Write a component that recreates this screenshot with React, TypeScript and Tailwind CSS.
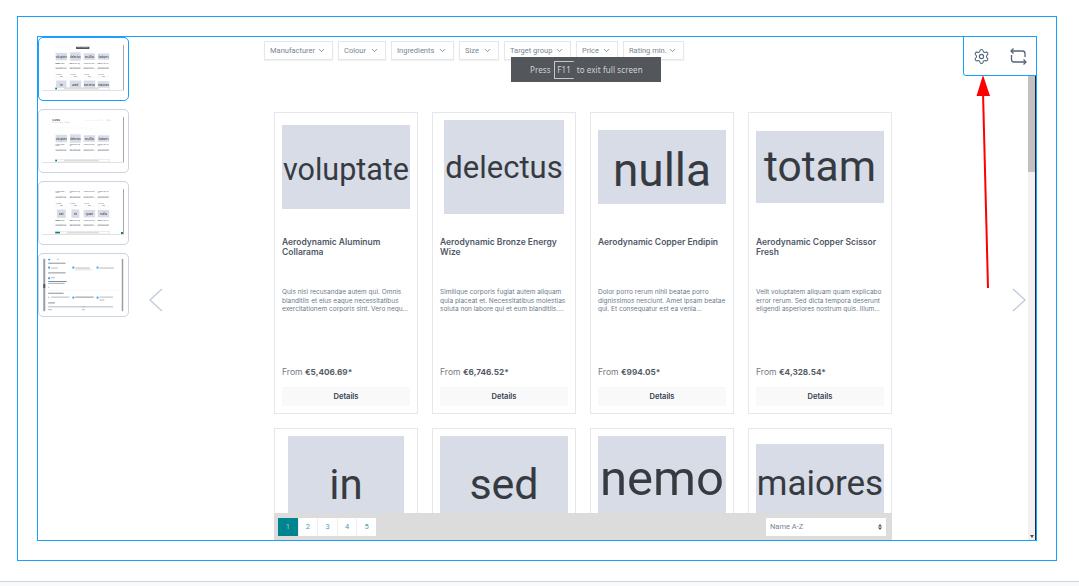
import React from "react";
import { ChevronDown, Settings } from "lucide-react";

interface Product {
  word: string;
  image: string;
  title: string;
  text: string;
  price: string;
}

type CardPart = "full" | "image" | "top" | "bottom";

const PRODUCTS: Product[] = [
  { word: "voluptate", image: "w-[128px] h-[84px] pt-[6px] text-[30.5px]", title: "Aerodynamic Aluminum Collarama", text: "Quis nisi recusandae autem qui. Omnis blanditiis et eius eaque necessitatibus exercitationem corporis sint. Vero nequ...", price: "€5,406.69*" },
  { word: "delectus", image: "w-[120px] h-[94px] pt-[3px] text-[31px]", title: "Aerodynamic Bronze Energy Wize", text: "Similique corporis fugiat autem aliquam quia placeat et. Necessitatibus molestias soluta non labore qui et eum blanditiis....", price: "€6,746.52*" },
  { word: "nulla", image: "w-[128px] h-[74px] pt-[6px] text-[46px]", title: "Aerodynamic Copper Endipin", text: "Dolor porro rerum nihil beatae porro dignissimos nesciunt. Amet ipsam beatae qui. Et consequatur est ea venia...", price: "€994.05*" },
  { word: "totam", image: "w-[128px] h-[72px] text-[42.5px]", title: "Aerodynamic Copper Scissor Fresh", text: "Velit voluptatem aliquam quam explicabo error rerum. Sed dicta tempora deserunt eligendi asperiores nostrum quis. Illum...", price: "€4,328.54*" },
  { word: "in", image: "w-[116px] h-[94px] pt-[2px] text-[42px]", title: "", text: "", price: "" },
  { word: "sed", image: "w-[128px] h-[94px] pt-[3px] text-[43px]", title: "", text: "", price: "" },
  { word: "nemo", image: "w-[128px] h-[94px] pb-[8px] text-[49px]", title: "", text: "", price: "" },
  { word: "maiores", image: "w-[128px] h-[78px] pt-[3px] text-[35px]", title: "", text: "", price: "" },
];

const NEXT_ROW: Product[] = [
  { ...PRODUCTS[0], word: "est", image: "w-[100px] h-[94px] text-[38px]" },
  { ...PRODUCTS[1], word: "et", image: "w-[90px] h-[94px] text-[38px]" },
  { ...PRODUCTS[2], word: "quae", image: "w-[128px] h-[84px] text-[38px]" },
  { ...PRODUCTS[3], word: "nulla", image: "w-[128px] h-[84px] text-[38px]" },
];

const FILTERS = [
  { label: "Manufacturer", width: "w-[69px]" },
  { label: "Colour", width: "w-[48px]" },
  { label: "Ingredients", width: "w-[63px]" },
  { label: "Size", width: "w-[40px]" },
  { label: "Target group", width: "w-[67px]" },
  { label: "Price", width: "w-[42px]" },
  { label: "Rating min.", width: "w-[61px]" },
];

function ProductCard({ product, part = "full" }: { product: Product; part?: CardPart }) {
  return (
    <div className="flex h-[302px] flex-col border border-[#e5e7eb] bg-white px-[7px] pt-[7px] pb-[7px] font-['Inter',sans-serif]">
      <div className="flex h-[94px] shrink-0 items-center justify-center">
        {part !== "bottom" && (
          <div className={`flex shrink-0 items-center justify-center bg-[#d8dce6] font-['Roboto',sans-serif] text-[#363b42] ${product.image}`}>
            {product.word}
          </div>
        )}
      </div>
      {part !== "image" && (
        <>
          <h3 className="mt-[23px] h-[51px] text-[8.5px] leading-[10px] font-semibold text-[#505866]">{product.title}</h3>
          <p className="text-[6.5px] leading-[8.5px] text-[#6b7a8c]">{product.text}</p>
        </>
      )}
      {(part === "full" || part === "bottom") && (
        <>
          <div className="mt-auto mb-[9px] text-[8.6px] leading-[11px] text-[#777b82]">
            From <span className="text-[8.2px] font-bold text-[#555b64]">{product.price}</span>
          </div>
          <button className="h-[19px] shrink-0 bg-[#f9f9f9] text-[7.5px] font-semibold text-[#374151]">Details</button>
        </>
      )}
    </div>
  );
}

function Filters() {
  return (
    <div className="flex gap-[5px] pl-[135px] font-['Roboto',sans-serif]">
      {FILTERS.map(({ label, width }) => (
        <div key={label} className={`flex h-[19px] items-center justify-between border border-[#e5e7eb] pr-[6px] pl-[5px] text-[7.5px] text-[#7a8591] shadow-[0_1px_1px_rgba(0,0,0,0.05)] ${width}`}>
          <span>{label}</span>
          <ChevronDown className="size-[9px] text-[#66717f]" />
        </div>
      ))}
    </div>
  );
}

function BottomBar({ wide }: { wide?: boolean }) {
  return (
    <div className="absolute bottom-0 left-[145px] flex h-[27px] w-[618px] items-center justify-between bg-[#dcdcdc] pr-[6px] pl-1 font-['Roboto',sans-serif]">
      <div className="flex h-[18px] text-[7.5px] text-[#4a9fb0]">
        <div className={`flex items-center justify-center bg-[#008490] text-[#9fd0d6] ${wide ? "w-[55px]" : "w-[19.6px]"}`}>1</div>
        {["2", "3", "4", "5"].map((n) => (
          <div key={n} className="flex w-[19.6px] items-center justify-center border-l border-[#eeeeee] bg-white">{n}</div>
        ))}
      </div>
      <div className="flex h-[18px] w-[120px] items-center justify-between bg-white px-1 text-[7.5px] text-[#7a8591]">
        <span>Name A-Z</span>
        <svg width="4" height="6" viewBox="0 0 4 6" className="fill-[#555]">
          <path d="M2 0 4 2.5H0ZM2 6 0 3.5H4Z" />
        </svg>
      </div>
    </div>
  );
}

function Toast() {
  return (
    <div className="absolute top-5 left-[382px] flex h-[25px] w-[150px] items-center gap-[3px] bg-[#53565a] pl-[19px] font-['Noto_Sans',sans-serif] text-[8px] tracking-[0.1px] text-[#d0d3d6]">
      <span>Press</span>
      <span className="flex h-[18px] w-[20px] items-center justify-center rounded-[1px] border-y border-l border-[#c4c7ca]">F11</span>
      <span>to exit full screen</span>
    </div>
  );
}

function Slide({ toast, children, wide, header }: {
  toast?: boolean;
  children: React.ReactNode;
  wide?: boolean;
  header?: React.ReactNode;
}) {
  return (
    <div className="relative h-[503px] w-[906px] shrink-0 overflow-hidden bg-white pt-1">
      {header}
      <Filters />
      <div className="mt-[52px] grid grid-cols-[repeat(4,144px)] gap-[14px] pl-[145px]">{children}</div>
      <BottomBar wide={wide} />
      {toast && <Toast />}
    </div>
  );
}

function TwoRows() {
  return (
    <>
      {PRODUCTS.slice(0, 4).map((p) => (
        <ProductCard key={p.word} product={p} />
      ))}
      {PRODUCTS.slice(4, 8).map((p) => (
        <ProductCard key={p.word} product={p} part="image" />
      ))}
    </>
  );
}

function PageHeader() {
  return (
    <div className="flex h-[112px] items-start justify-between pt-[10px] pr-[130px] pl-[115px] font-['Inter',sans-serif]">
      <div>
        <div className="text-[30px] leading-[34px] font-bold text-[#4b5563]">Cards</div>
        <div className="text-[20px] leading-[26px] text-[#b6bbc2]">Home / Shop / Cards</div>
      </div>
      <div className="flex gap-10 pt-2 text-[20px]">
        <span className="text-[#e1e4e8]">Overview Details Help</span>
        <span className="text-[#7dd3e0]">More</span>
      </div>
    </div>
  );
}

function Thumb({ active, children }: { active?: boolean; children: React.ReactNode }) {
  return (
    <div aria-hidden="true" className={`relative h-[64px] w-[91px] shrink-0 overflow-hidden rounded-[5px] border bg-white ${active ? "border-[#1a9fff]" : "border-[#cbd5e1]"}`}>
      <div className="absolute inset-0 blur-[0.5px]">{children}</div>
    </div>
  );
}

function ThumbChrome() {
  return (
    <>
      <div className="absolute top-[7px] left-[84px] h-[45px] w-px bg-[#a8a8a8]" />
      <div className="absolute top-[52px] left-[3px] h-px w-[82px] bg-[#e2e2e2]" />
    </>
  );
}

function FormThumbnail() {
  const gray = "#b4b8bd";
  const blue = "#3aa0f0";
  return (
    <svg viewBox="0 0 91 64" width="89" height="62" className="absolute inset-0">
      <rect x="4" y="5" width="2" height="54" fill="#9c9c9c" />
      <rect x="4" y="31" width="2" height="4" fill="#4b5563" />
      <rect x="85" y="5" width="1.5" height="54" fill="#9c9c9c" />
      <rect x="9" y="5" width="2" height="1.5" fill={blue} />
      <rect x="18" y="5" width="2" height="1" fill={gray} />
      <rect x="9" y="9" width="18" height="1" fill="#8a8f96" />
      {[9, 34, 59].map((x) => (
        <rect key={x} x={x} y="13" width="2" height="2" fill={blue} />
      ))}
      <rect x="12" y="14" width="7" height="1" fill={gray} />
      <rect x="37" y="14" width="15" height="1" fill={gray} />
      <rect x="37" y="16" width="17" height="0.8" fill="#d5d8dc" />
      <rect x="62" y="14" width="15" height="1" fill={gray} />
      <rect x="9" y="19" width="18" height="1" fill="#8a8f96" />
      <rect x="9" y="24" width="2" height="2" fill={blue} />
      <rect x="12" y="24" width="4" height="1" fill={gray} />
      <rect x="9" y="28" width="19" height="1" fill="#777c84" />
      <rect x="9" y="30" width="17" height="1" fill={gray} />
      <rect x="9" y="34" width="1" height="1" fill={gray} />
      <rect x="9" y="37" width="76" height="0.5" fill="#eceef0" />
      <rect x="9" y="40" width="16" height="1" fill="#8a8f96" />
      <rect x="9" y="44" width="1" height="1.5" fill={gray} />
      <rect x="12" y="44" width="19" height="1" fill={gray} />
      <rect x="34" y="44" width="2" height="2" fill={blue} />
      <rect x="37" y="44" width="19" height="1" fill="#8a8f96" />
      <rect x="59" y="44" width="2" height="2" fill={blue} />
      <rect x="62" y="44" width="14" height="1" fill={gray} />
      <rect x="62" y="47" width="5" height="1" fill={gray} />
      <rect x="9" y="50" width="7" height="1" fill="#8a8f96" />
      <rect x="9" y="54" width="38" height="1" fill={gray} />
      <rect x="44" y="54" width="32" height="1" fill={gray} />
      <rect x="9" y="57" width="4" height="1" fill={gray} />
      <rect x="44" y="57" width="3" height="1" fill={gray} />
    </svg>
  );
}

function Thumbnails() {
  return (
    <div className="flex w-[91px] shrink-0 flex-col gap-2">
      <Thumb active>
        <div className="absolute top-[7px] left-[3px] origin-top-left scale-[0.089]">
          <Slide toast>
            <TwoRows />
          </Slide>
        </div>
        <ThumbChrome />
      </Thumb>
      <Thumb>
        <div className="absolute top-[7px] left-[3px] origin-top-left scale-[0.089]">
          <Slide header={<PageHeader />}>
            {PRODUCTS.slice(0, 4).map((p) => (
              <ProductCard key={p.word} product={p} part="top" />
            ))}
          </Slide>
        </div>
        <ThumbChrome />
      </Thumb>
      <Thumb>
        <div className="absolute top-[7px] left-[3px] origin-top-left scale-[0.089]">
          <div className="relative h-[503px] w-[906px] overflow-hidden bg-white">
            <div className="-mt-[94px] grid grid-cols-[repeat(4,144px)] gap-[14px] pl-[145px]">
              {PRODUCTS.slice(0, 4).map((p) => (
                <ProductCard key={p.word} product={p} part="bottom" />
              ))}
              {NEXT_ROW.map((p) => (
                <ProductCard key={p.word} product={p} part="top" />
              ))}
            </div>
            <BottomBar wide />
          </div>
        </div>
        <ThumbChrome />
        <div className="absolute top-[50px] left-[82px] size-[2px] bg-[#008490]" />
      </Thumb>
      <Thumb>
        <FormThumbnail />
      </Thumb>
    </div>
  );
}

function Chevron({ left }: { left?: boolean }) {
  return (
    <svg width="15" height="24" viewBox="0 0 15 24" fill="none" className="stroke-[#c5cede] stroke-[1.5]">
      <polyline points={left ? "14,1 2,12 14,23" : "1,1 13,12 1,23"} />
    </svg>
  );
}

function Toolbar() {
  return (
    <div className="absolute top-[-1px] right-[-1px] z-10 flex h-10 w-[74px] items-center justify-between rounded-bl-[3px] border border-[#1a9fff] bg-white px-[9px] text-[#52647a]">
      <Settings className="size-[17px]" strokeWidth={1.5} />
      <svg width="17" height="17" viewBox="0 0 17 17" fill="none" stroke="currentColor" strokeWidth="1.3">
        <path d="M3.5 0.5 1 3l2.5 2.5" />
        <path d="M1 3h11.5A2.5 2.5 0 0 1 15 5.5V9" />
        <path d="M1.5 7v4.5A2.5 2.5 0 0 0 4 14h12" />
        <path d="M13.5 11.5 16 14l-2.5 2.5" />
      </svg>
    </div>
  );
}

function Scrollbar() {
  return (
    <div className="absolute top-0 right-0 flex h-full w-2 flex-col border-r border-[#1f2937] bg-[#f1f1f1]">
      <div className="mt-[39px] h-[96px] bg-[#c1c1c1]" />
      <div className="mt-auto mb-[2px] h-0 w-0 self-center border-x-[2px] border-t-[3px] border-x-transparent border-t-[#505050]" />
    </div>
  );
}

export default function App() {
  return (
    <div className="relative flex h-[586px] flex-col bg-white">
      <div className="flex-1 pt-4 pl-[17px]">
        <div className="h-[545px] w-[1040px] border border-[#1a9fff] p-[19px]">
          <div className="relative flex h-[505px] w-[1000px] overflow-hidden border border-[#1a9fff]">
            <Thumbnails />
            <Slide toast>
              <TwoRows />
            </Slide>
            <div className="absolute top-[251px] left-[110px]"><Chevron left /></div>
            <div className="absolute top-[251px] left-[974px]"><Chevron /></div>
            <Scrollbar />
            <Toolbar />
          </div>
        </div>
      </div>
      <div className="h-[5px] border-t border-[#d4d4d4] bg-[#f9fafb]" />

      {/* annotation arrow */}
      <svg width="20" height="220" viewBox="0 0 20 220" className="absolute top-[74px] left-[974px]">
        <line x1="9" y1="18" x2="14" y2="214" stroke="#ff0000" strokeWidth="2" />
        <polygon points="9,1 2.5,22 16,22" fill="#ff0000" />
      </svg>
    </div>
  );
}
